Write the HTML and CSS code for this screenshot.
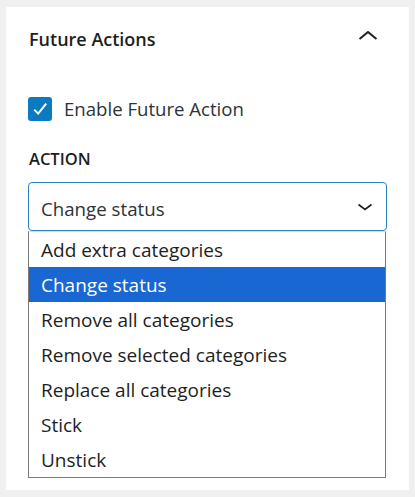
FILE: index.html
```html
<!DOCTYPE html>
<html lang="en">
<head>
<meta charset="utf-8">
<title>Future Actions</title>
<link rel="stylesheet" href="styles.css">
</head>
<body>
<div class="panel">
  <div class="header">
    <h2 class="title">Future Actions</h2>
    <button class="toggle" type="button" aria-label="Collapse">
      <svg class="chev-up" viewBox="0 0 24 12" width="24" height="12"><path d="M3.5 10 L12 3 L20.5 10" fill="none" stroke="#1e1e1e" stroke-width="2"/></svg>
    </button>
  </div>
  <label class="check">
    <span class="box"><svg viewBox="0 0 24 24" width="24" height="24"><path d="M6.2 12.6 L10.2 16.6 L18.2 6.6" fill="none" stroke="#fff" stroke-width="2"/></svg></span>
    <span class="check-text">Enable Future Action</span>
  </label>
  <div class="field-label">ACTION</div>
  <div class="select">
    <span class="select-value">Change status</span>
    <svg class="chev-down" viewBox="0 0 16 8" width="16" height="8"><path d="M1.5 1.5 L8 6.5 L14.5 1.5" fill="none" stroke="#1e1e1e" stroke-width="1.6"/></svg>
  </div>
  <ul class="options">
    <li>Add extra categories</li>
    <li class="selected">Change status</li>
    <li>Remove all categories</li>
    <li>Remove selected categories</li>
    <li>Replace all categories</li>
    <li>Stick</li>
    <li>Unstick</li>
  </ul>
</div>
</body>
</html>
```
FILE: styles.css
```css
* { box-sizing: border-box; }
html, body { margin: 0; }
body {
  background: #f0f0f0;
  padding: 7px 6px;
  font-family: "Open Sans", "Noto Sans", sans-serif;
  color: #1e1e1e;
}
.panel {
  background: #fff;
  width: 403px;
  padding: 20px 22px 12px;
}
.header {
  display: flex;
  justify-content: space-between;
  align-items: flex-start;
  height: 24px;
}
.title {
  margin: 0;
  font-size: 18px;
  font-weight: 600;
  line-height: 24px;
  padding-left: 1px;
}
.toggle {
  border: 0;
  background: none;
  padding: 0;
  margin: 2px 7px 0 0;
  width: 24px;
  height: 12px;
  display: flex;
}
.check {
  display: flex;
  align-items: center;
  gap: 12px;
  margin-top: 46px;
  height: 24px;
}
.box {
  width: 24px;
  height: 24px;
  border-radius: 3px;
  background: #0b7bc1;
  display: flex;
}
.check-text {
  font-size: 18.6px;
  line-height: 24px;
  color: #2c3338;
}
.field-label {
  margin-top: 28px;
  margin-bottom: 13px;
  font-size: 16.5px;
  font-weight: 600;
  line-height: 20px;
  padding-left: 1px;
}
.select {
  height: 49px;
  border: 1.5px solid #2a82c6;
  border-radius: 4px;
  display: flex;
  align-items: center;
  justify-content: space-between;
  padding: 3px 13px 0 12px;
  font-size: 18.7px;
  color: #2c3338;
}
.chev-down { margin-top: -3px; }
.options {
  list-style: none;
  margin: 0;
  padding: 0;
  border: 1px solid #7a7a7a;
  border-top: 1px solid #cfe0ef;
  width: 358px;
}
.options li {
  height: 35px;
  line-height: 35px;
  padding: 1px 0 0 12px;
  font-size: 19px;
  color: #1e1e1e;
}
.options li.selected {
  background: #1967d2;
  color: #fff;
}
```
